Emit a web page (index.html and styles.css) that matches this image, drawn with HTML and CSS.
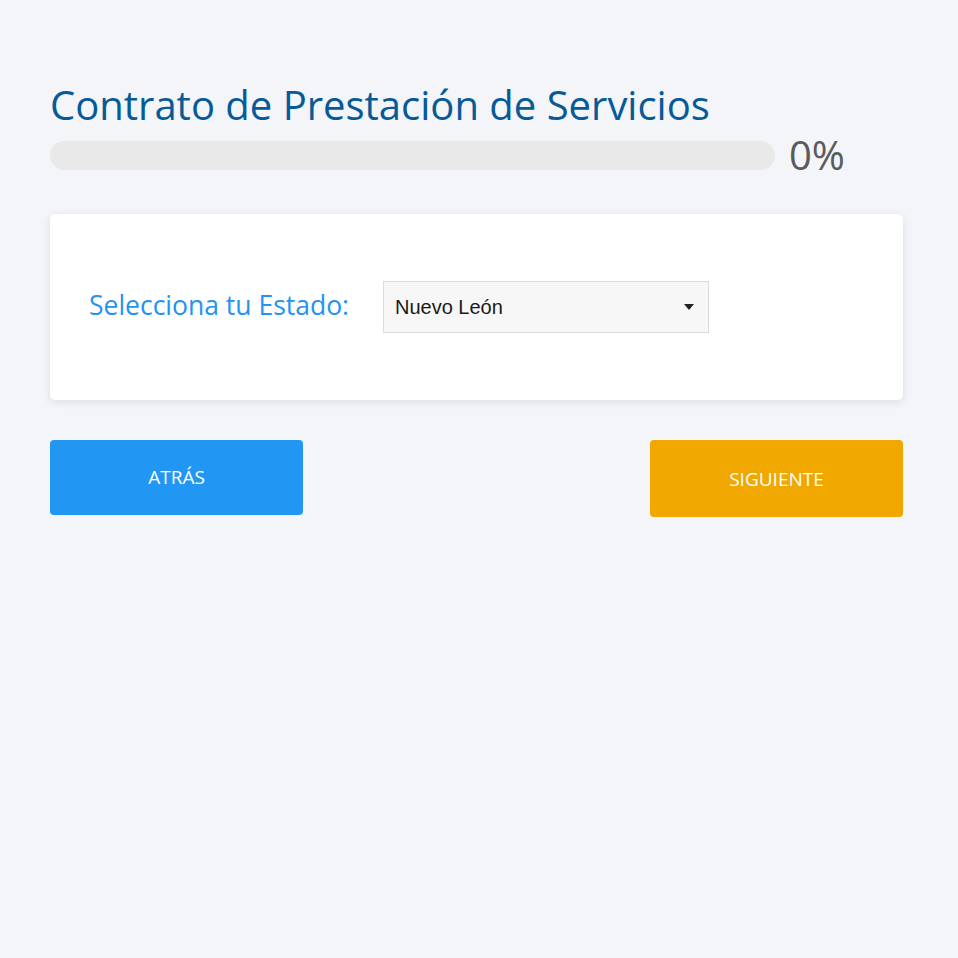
FILE: index.html
```html
<!DOCTYPE html>
<html lang="es">
<head>
<meta charset="utf-8">
<title>Contrato de Prestación de Servicios</title>
<link rel="stylesheet" href="styles.css">
</head>
<body>
<main class="page">
  <h1 class="title">Contrato de Prestación de Servicios</h1>
  <div class="progress-row">
    <div class="progress"><div class="progress-fill" style="width:0%"></div></div>
    <span class="progress-label">0%</span>
  </div>
  <section class="card">
    <label class="field-label" for="estado">Selecciona tu Estado:</label>
    <div class="select" id="estado">
      <span class="select-value">Nuevo León</span>
      <svg class="select-arrow" width="10" height="6" viewBox="0 0 10 6"><path d="M0 0h10L5 6z" fill="#222"/></svg>
    </div>
  </section>
  <div class="actions">
    <button class="btn btn-back">ATRÁS</button>
    <button class="btn btn-next">SIGUIENTE</button>
  </div>
</main>
</body>
</html>
```
FILE: styles.css
```css
html, body {
  margin: 0;
  padding: 0;
  background: #f3f5f9;
}
body {
  font-family: "Open Sans", "Noto Sans", sans-serif;
  min-height: 958px;
}
.page {
  padding: 80px 55px 0 50px;
}
.title {
  margin: 0;
  font-weight: 400;
  font-size: 40px;
  line-height: 50px;
  color: #075a98;
}
.progress-row {
  display: flex;
  align-items: center;
  height: 29px;
  margin-top: 11px;
}
.progress {
  width: 725px;
  height: 29px;
  border-radius: 15px;
  background: #e9e9ea;
  overflow: hidden;
}
.progress-fill {
  height: 100%;
  background: #2196f3;
}
.progress-label {
  margin-left: 14px;
  font-size: 40px;
  line-height: 29px;
  color: #5b5b5d;
  margin-top: -2px;
}
.card {
  margin-top: 44px;
  height: 186px;
  background: #fff;
  border-radius: 5px;
  box-shadow: 0 2px 8px rgba(40, 50, 80, 0.12);
  display: flex;
  align-items: center;
  padding: 0 39px;
  box-sizing: border-box;
}
.field-label {
  font-size: 26.5px;
  color: #2393f2;
  width: 294px;
  margin-top: -4px;
}
.select {
  width: 326px;
  height: 52px;
  box-sizing: border-box;
  border: 1px solid #dcdcdc;
  background: #f7f7f8;
  display: flex;
  align-items: center;
  justify-content: space-between;
  padding: 0 14px 0 11px;
}
.select-value {
  font-family: "Liberation Sans", Arial, sans-serif;
  font-size: 20px;
  color: #1a1a1a;
}
.actions {
  display: flex;
  justify-content: space-between;
  align-items: flex-start;
  margin-top: 40px;
}
.btn {
  width: 253px;
  border: 0;
  border-radius: 4px;
  color: #fff;
  font-family: "Open Sans", "Noto Sans", sans-serif;
  font-size: 19px;
  cursor: pointer;
}
.btn-back {
  height: 75px;
  background: #2196f3;
  padding-bottom: 2px;
}
.btn-next {
  height: 77px;
  background: #f0a800;
}
```
